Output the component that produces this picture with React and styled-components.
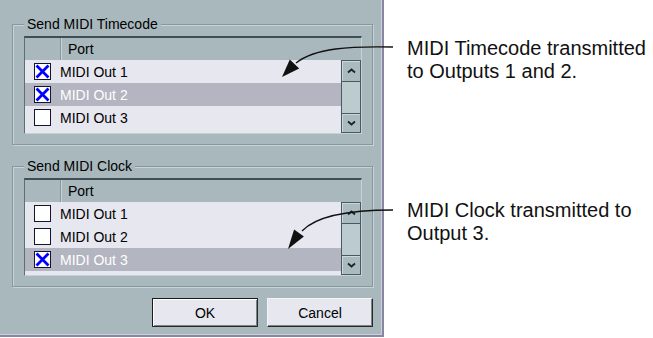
import React from 'react';
import styled, { createGlobalStyle } from 'styled-components';

const timecodePorts = [
  { name: 'MIDI Out 1', on: true },
  { name: 'MIDI Out 2', on: true, selected: true },
  { name: 'MIDI Out 3', on: false },
];

const clockPorts = [
  { name: 'MIDI Out 1', on: false },
  { name: 'MIDI Out 2', on: false },
  { name: 'MIDI Out 3', on: true, selected: true },
];

function Check({ on }) {
  return (
    <Box>
      {on && (
        <svg width="15" height="15" viewBox="0 0 15 15">
          <path d="M2.5 2.5 L12.5 12.5 M12.5 2.5 L2.5 12.5" stroke="#0000ff" strokeWidth="2.8" strokeLinecap="square" />
        </svg>
      )}
    </Box>
  );
}

function Chevron({ down }) {
  return (
    <svg width="9" height="6" viewBox="0 0 9 6">
      <polyline
        points={down ? '1,1.5 4.5,4.5 8,1.5' : '1,4.5 4.5,1.5 8,4.5'}
        fill="none"
        stroke="#1c2224"
        strokeWidth="1.8"
      />
    </svg>
  );
}

function PortList({ ports }) {
  return (
    <List>
      <Header>
        <HeadCheck />
        <HeadPort>Port</HeadPort>
      </Header>
      <Body>
        <Rows>
          {ports.map((p, i) => (
            <Row key={i} selected={p.selected}>
              <CheckCell>
                <Check on={p.on} />
              </CheckCell>
              <Label>{p.name}</Label>
            </Row>
          ))}
        </Rows>
        <Scrollbar>
          <ScrollButton up>
            <Chevron />
          </ScrollButton>
          <Track />
          <ScrollButton>
            <Chevron down />
          </ScrollButton>
        </Scrollbar>
      </Body>
    </List>
  );
}

function App() {
  return (
    <React.Fragment>
      <GlobalStyle />
      <Page>
        <Dialog>
          <Group>
            <Legend>Send MIDI Timecode</Legend>
            <PortList ports={timecodePorts} />
          </Group>
          <Group second>
            <Legend>Send MIDI Clock</Legend>
            <PortList ports={clockPorts} />
          </Group>
          <Buttons>
            <Button primary>OK</Button>
            <Button>Cancel</Button>
          </Buttons>
        </Dialog>
        <Notes>
          <Note>MIDI Timecode transmitted<br />to Outputs 1 and 2.</Note>
          <Note second>MIDI Clock transmitted to<br />Output 3.</Note>
        </Notes>
        <Arrows width="653" height="338" viewBox="0 0 653 338">
          <path d="M393 47 C350 46 315 48 296 63" fill="none" stroke="#111" strokeWidth="1.3" />
          <polygon points="282,77 289.8,59.5 299.2,68.5" fill="#111" />
          <path d="M393 210 C355 210 318 214 302 231" fill="none" stroke="#111" strokeWidth="1.3" />
          <polygon points="288,249 294.1,229.6 303.9,236.4" fill="#111" />
        </Arrows>
      </Page>
    </React.Fragment>
  );
}

export default App;

const GlobalStyle = createGlobalStyle`
  * {
    box-sizing: border-box;
    margin: 0;
    padding: 0;
  }
  body {
    background: #fff;
  }
`

const Page = styled.div`
  position: relative;
  display: flex;
  width: 653px;
  height: 338px;
  background: #fff;
`

const Dialog = styled.div`
  width: 384px;
  height: 337px;
  padding: 16px 0 0 12px;
  background: #a9b8bc;
  border-right: 2px solid #8a85a5;
  border-bottom: 2px solid #8a85a5;
  box-shadow: inset -1px -1px 0 #c9d3d6;
  font-family: "Liberation Sans", Arial, sans-serif;
  font-size: 14px;
  color: #000;
`

const Group = styled.fieldset`
  width: 361px;
  margin-top: ${p => p.second ? '13px' : '0'};
  padding: 4px 10px 10px 11px;
  border: 1px solid #8797a0;
  box-shadow: inset 1px 1px 0 #c8d3d6, 1px 1px 0 #c8d3d6;
  min-width: 0;
`

const Legend = styled.legend`
  padding: 0 3px;
  line-height: 16px;
  background: #a9b8bc;
`

const List = styled.div`
  width: 338px;
  border-top: 2px solid #3f4f54;
  border-left: 1px solid #5e6e72;
  border-right: 1px solid #c6d1d4;
  border-bottom: 1px solid #c6d1d4;
  background: #e6e7ef;
`

const Header = styled.div`
  display: flex;
  height: 22px;
  background: #a9b8bc;
`

const HeadCheck = styled.div`
  width: 35px;
`

const HeadPort = styled.div`
  flex: 1;
  display: flex;
  align-items: center;
  padding-left: 7px;
  border-left: 1px solid #8797a0;
  box-shadow: inset 1px 0 0 #c8d3d6;
`

const Body = styled.div`
  display: flex;
`

const Rows = styled.div`
  flex: 1;
  padding-bottom: 4px;
`

const Row = styled.div`
  display: flex;
  align-items: center;
  height: 23px;
  background: ${p => p.selected ? '#b3b5c1' : 'transparent'};
  color: ${p => p.selected ? '#fff' : '#000'};
`

const CheckCell = styled.div`
  width: 35px;
  display: flex;
  justify-content: center;
`

const Label = styled.span`
  white-space: nowrap;
`

const Box = styled.span`
  width: 17px;
  height: 17px;
  border: 1px solid #14142a;
  background: #fff;
  display: flex;
  align-items: center;
  justify-content: center;
`

const Scrollbar = styled.div`
  width: 20px;
  display: flex;
  flex-direction: column;
`

const ScrollButton = styled.div`
  height: ${p => p.up ? '22px' : '20px'};
  display: flex;
  align-items: center;
  justify-content: center;
  background: #a9bbbf;
  border: 1px solid #485a5f;
  box-shadow: inset 1px 1px 0 #ccd8da;
`

const Track = styled.div`
  flex: 1;
  background: #bccbce;
  border-left: 1px solid #485a5f;
  border-right: 1px solid #485a5f;
`

const Buttons = styled.div`
  width: 361px;
  display: flex;
  justify-content: flex-end;
  gap: 9px;
  margin-top: 11px;
`

const Button = styled.div`
  width: 106px;
  height: 29px;
  display: flex;
  align-items: center;
  justify-content: center;
  background: #e6e7ef;
  border: 1px solid ${p => p.primary ? '#1a1a1a' : '#f4f4f8'};
  border-right-color: #2a2a2a;
  border-bottom-color: #2a2a2a;
  box-shadow: ${p => p.primary
    ? 'inset 1px 1px 0 #fff, inset -1px -1px 0 #7a8488'
    : 'inset -1px -1px 0 #7a8488'};
`

const Notes = styled.div`
  padding-left: 23px;
  font-family: "Liberation Sans", Arial, sans-serif;
  font-size: 20px;
  line-height: 23px;
  color: #111;
`

const Note = styled.p`
  margin-top: ${p => p.second ? '116px' : '37px'};
  white-space: nowrap;
`

const Arrows = styled.svg`
  position: absolute;
  left: 0;
  top: 0;
  pointer-events: none;
`
